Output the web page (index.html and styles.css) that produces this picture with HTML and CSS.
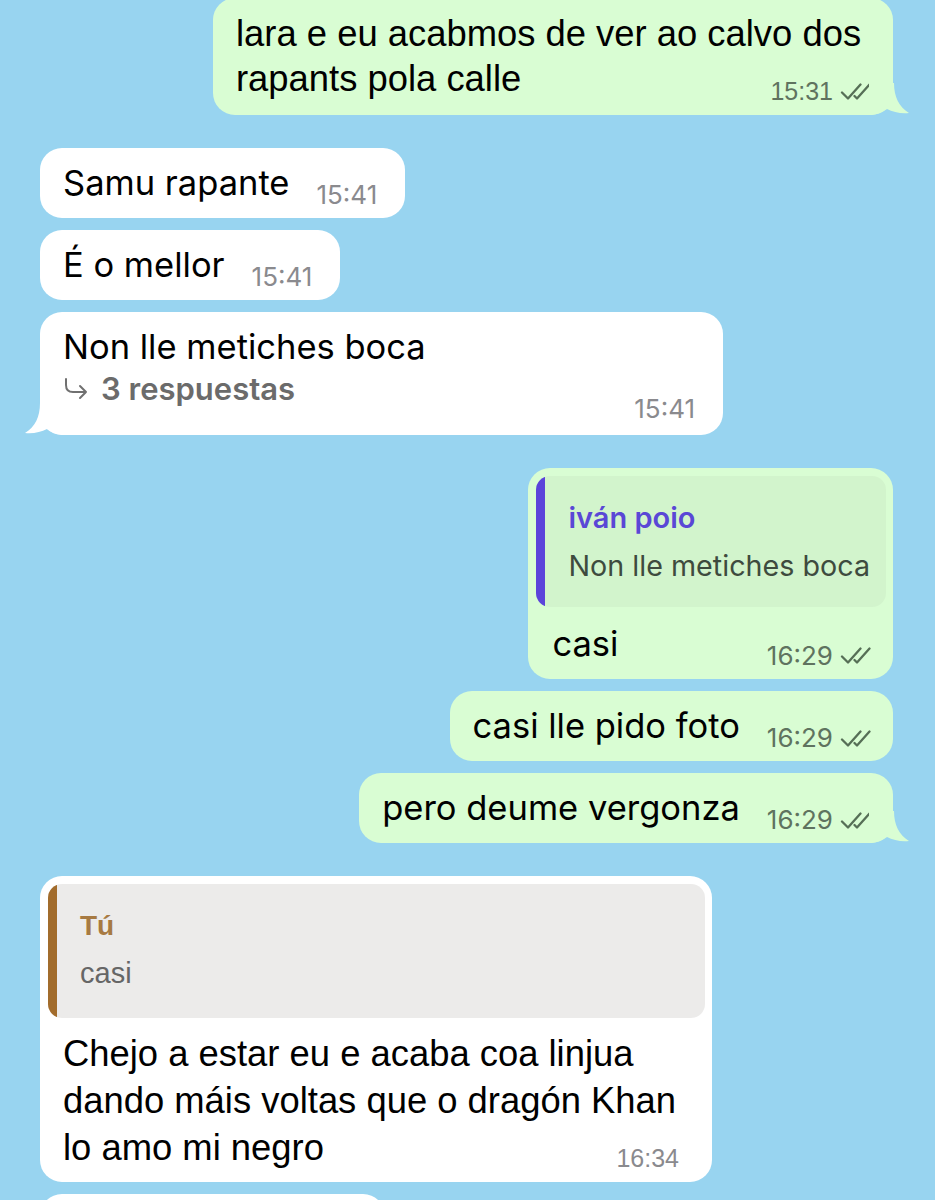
FILE: index.html
```html
<!DOCTYPE html>
<html lang="gl">
<head>
<meta charset="utf-8">
<title>Chat</title>
<link rel="stylesheet" href="styles.css">
</head>
<body>
<main class="chat">

  <div class="msg out hv w680 first">
    <p class="para">lara e eu acabmos de ver ao calvo dos<br>rapants pola calle<span class="meta float">15:31<svg class="ticks" viewBox="0 0 32 17"><path d="M2 9.5 L8 15.5 L20.5 1.5"/><path d="M14.5 13 L17 15.5 L29.5 1.5"/></svg></span></p>
    <svg class="tail tail-out" viewBox="0 0 40 32"><path d="M15 0 C15 14 10 24 0 30 C8 31 16 29 22 26 C26 29 30 31 38 32 L40 32 L40 0 Z"/></svg>
  </div>

  <div class="msg in gap">
    <div class="line"><span class="txt">Samu rapante</span><span class="meta">15:41</span></div>
  </div>

  <div class="msg in">
    <div class="line"><span class="txt">É o mellor</span><span class="meta">15:41</span></div>
  </div>

  <div class="msg in w683 threaded">
    <div class="txt">Non lle metiches boca</div>
    <div class="line spread">
      <span class="replies"><svg class="arrow" viewBox="0 0 26 22"><path d="M3 1 V7 Q3 14 10 14 H23 M17 8 L23 14 L17 20"/></svg>3 respuestas</span>
      <span class="meta">15:41</span>
    </div>
    <svg class="tail tail-in" viewBox="0 0 40 32"><path d="M15 0 C15 14 10 24 0 30 C8 31 16 29 22 26 C26 29 30 31 38 32 L40 32 L40 0 Z"/></svg>
  </div>

  <div class="msg out gap has-quote">
    <div class="quote q-purple">
      <div class="q-name">iván poio</div>
      <div class="q-text">Non lle metiches boca</div>
    </div>
    <div class="line spread row-in-quote"><span class="txt">casi</span><span class="meta">16:29<svg class="ticks" viewBox="0 0 32 17"><path d="M2 9.5 L8 15.5 L20.5 1.5"/><path d="M14.5 13 L17 15.5 L29.5 1.5"/></svg></span></div>
  </div>

  <div class="msg out">
    <div class="line"><span class="txt">casi lle pido foto</span><span class="meta">16:29<svg class="ticks" viewBox="0 0 32 17"><path d="M2 9.5 L8 15.5 L20.5 1.5"/><path d="M14.5 13 L17 15.5 L29.5 1.5"/></svg></span></div>
  </div>

  <div class="msg out">
    <div class="line"><span class="txt">pero deume vergonza</span><span class="meta">16:29<svg class="ticks" viewBox="0 0 32 17"><path d="M2 9.5 L8 15.5 L20.5 1.5"/><path d="M14.5 13 L17 15.5 L29.5 1.5"/></svg></span></div>
    <svg class="tail tail-out" viewBox="0 0 40 32"><path d="M15 0 C15 14 10 24 0 30 C8 31 16 29 22 26 C26 29 30 31 38 32 L40 32 L40 0 Z"/></svg>
  </div>

  <div class="msg in gap hv w672 has-quote">
    <div class="quote q-brown">
      <div class="q-name">Tú</div>
      <div class="q-text">casi</div>
    </div>
    <p class="para long">Chejo a estar eu e acaba coa linjua<br>dando máis voltas que o dragón Khan<br>lo amo mi negro<span class="meta float">16:34</span></p>
  </div>

  <div class="msg in next">
    <div class="line"><span class="txt">&nbsp;</span></div>
  </div>

</main>
</body>
</html>
```

FILE: styles.css
```css
* {
  box-sizing: border-box;
  margin: 0;
  padding: 0;
}

html, body {
  height: 1200px;
  overflow: hidden;
}

body {
  background: #98d4f0;
  font-family: Inter, "Noto Sans", sans-serif;
  color: #000;
}

.chat {
  display: flex;
  flex-direction: column;
  padding: 0 42px 0 40px;
}

/* bubbles */
.msg {
  position: relative;
  align-self: flex-start;
  background: #fff;
  border-radius: 22px;
  padding: 12px 28px 12.5px 23px;
  margin-top: 12.5px;
}

.msg.out {
  align-self: flex-end;
  background: #d9fdd3;
  padding-right: 21px;
}

.msg.first { margin-top: -2px; padding-top: 13px; padding-bottom: 14px; }
.msg.gap { margin-top: 33px; }
.msg.next { width: 345px; margin-top: 12px; height: 70px; }

.w680 { width: 680px; }
.w683 { width: 683px; }
.w672 { width: 672px; }

.txt {
  font-size: 34.5px;
  line-height: 45px;
  white-space: nowrap;
}

.line {
  display: flex;
  align-items: flex-end;
  gap: 27px;
}

.line.spread {
  justify-content: space-between;
}

/* time + ticks */
.meta {
  display: flex;
  align-items: center;
  gap: 7px;
  font-size: 26px;
  line-height: 26px;
  color: #8a8a8e;
  white-space: nowrap;
}

.line .meta { margin-bottom: -3px; }
.threaded .line .meta { margin-bottom: 0; }

.out .meta { color: #5f735f; }

.ticks {
  width: 32px;
  height: 17px;
  fill: none;
  stroke: #566f56;
  stroke-width: 2.3;
  stroke-linecap: round;
  stroke-linejoin: round;
}

/* Helvetica-like bubbles */
.hv { font-family: "Liberation Sans", Arial, sans-serif; }

.para {
  font-size: 36.4px;
  line-height: 45px;
}

.para.long { line-height: 47px; }

.meta.float {
  float: right;
  margin: 22px 0 -3px 20px;
  font-size: 25px;
}

.para.long .meta.float { margin-top: 21px; }

/* replies row */
.replies {
  display: flex;
  align-items: center;
  gap: 12px;
  font-size: 31px;
  line-height: 40px;
  font-weight: 600;
  color: #6b6b6b;
  margin-bottom: 13px;
}

.arrow {
  width: 26px;
  height: 22px;
  fill: none;
  stroke: #707070;
  stroke-width: 2;
  stroke-linecap: round;
  stroke-linejoin: round;
}

/* quoted replies */
.msg.has-quote {
  padding: 8px 7px 13px 8px;
}

.msg.in.has-quote { padding-bottom: 11px; }

.quote {
  border-radius: 14px;
  padding: 22px 16px 21px 32px;
}

.q-purple {
  background: linear-gradient(to right, #5b44da 9px, #d2f4cc 9px);
}

.q-brown {
  background: linear-gradient(to right, #a26c2c 9px, #ecebea 9px);
  padding: 22px 16px 25px 32px;
}

.q-name {
  font-size: 29px;
  line-height: 40px;
  font-weight: 600;
}

.q-purple .q-name { color: #5a47d6; }
.q-brown .q-name { color: #a77a42; font-weight: 700; font-size: 28px; }

.q-text {
  font-size: 28.7px;
  line-height: 40px;
  margin-top: 8px;
  white-space: nowrap;
}

.q-purple .q-text { color: #3e4b3e; }
.q-brown .q-text { color: #666; margin-top: 7px; font-size: 29px; }

.row-in-quote {
  padding: 0 14px 0 16px;
  margin-top: 14px;
}

.has-quote .para {
  padding: 0 26px 0 15px;
  margin-top: 12px;
}

/* tails */
.tail {
  position: absolute;
  bottom: 0;
  width: 40px;
  height: 32px;
}

.tail-in {
  left: -15px;
  fill: #fff;
}

.tail-out {
  right: -16px;
  transform: scaleX(-1);
  fill: #d9fdd3;
}
```
